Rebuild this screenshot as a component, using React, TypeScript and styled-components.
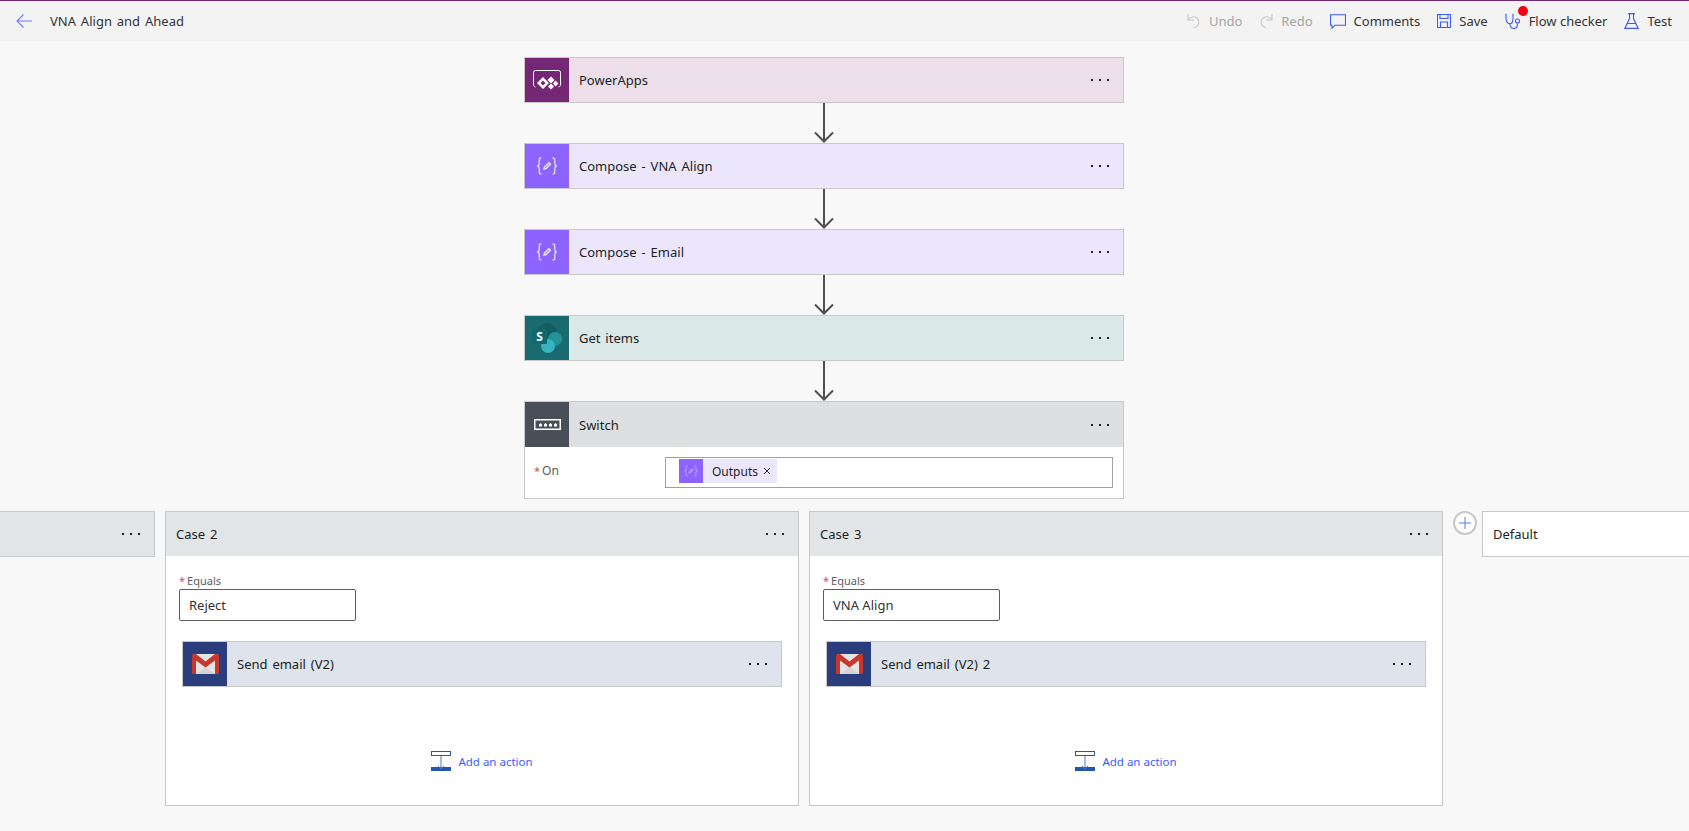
import React from 'react';
import styled, { createGlobalStyle } from 'styled-components';

const Global = createGlobalStyle`
  html, body {
    margin: 0;
    padding: 0;
    height: 100%;
    overflow: hidden;
    background: #f8f8f8;
    font-family: "Noto Sans", "Open Sans", "Liberation Sans", sans-serif;
    color: #201f1e;
  }
`;

const Page = styled.div`
  width: 1689px;
  height: 831px;
  overflow: hidden;
  display: flex;
  flex-direction: column;
`;

const TopBar = styled.header`
  height: 40px;
  flex: none;
  border-top: 1px solid #742774;
  background: #f3f3f3;
  display: flex;
  align-items: center;
  padding: 0 17px 0 16px;
  font-size: 13px;
`;

const Title = styled.div`
  margin-left: 18px;
  color: #333;
  flex: 1;
  word-spacing: 1.5px;
`;

const Commands = styled.div`
  display: flex;
  align-items: center;
  gap: 17px;
`;

const Command = styled.div<{ $off?: boolean }>`
  position: relative;
  display: flex;
  align-items: center;
  gap: 8px;
  color: ${(p) => (p.$off ? '#a6a6a6' : '#333')};
`;

const RedDot = styled.span`
  position: absolute;
  left: 13px;
  top: -6px;
  width: 10px;
  height: 10px;
  border-radius: 50%;
  background: #f00010;
`;

const Canvas = styled.main`
  flex: 1;
  padding-top: 16px;
  display: flex;
  flex-direction: column;
`;

const Flow = styled.div`
  width: 600px;
  margin-left: 524px;
  display: flex;
  flex-direction: column;
`;

const Card = styled.div`
  border: 1px solid #c8c8c8;
  background: #fff;
`;

const CardHead = styled.div<{ $tint: string }>`
  height: 44px;
  display: flex;
  align-items: center;
  background: ${(p) => p.$tint};
  font-size: 13px;
  word-spacing: 1.5px;
  color: #201f1e;
`;

const SwitchHead = styled(CardHead)`
  height: 45px;
`;

const IconBox = styled.div<{ $bg: string }>`
  width: 44px;
  align-self: stretch;
  flex: none;
  display: flex;
  align-items: center;
  justify-content: center;
  background: ${(p) => p.$bg};
`;

const HeadLabel = styled.div`
  margin-left: 10px;
  flex: 1;
`;

const CaseTitle = styled.div`
  flex: 1;
`;

const Dots = styled.div`
  display: flex;
  gap: 6px;
  margin-right: 14px;
  & > i {
    display: block;
    width: 2px;
    height: 2px;
    background: #201f1e;
  }
`;

const Connector = styled.svg`
  display: block;
  width: 24px;
  height: 40px;
  margin-left: 288px;
`;

const SwitchBody = styled.div`
  height: 51px;
  display: grid;
  grid-template-columns: 131px 1fr;
  padding: 10px 10px 0 9px;
  box-sizing: border-box;
  font-size: 12px;
`;

const FieldLabel = styled.div`
  color: #5c5c5c;
  padding-top: 5px;
`;

const Star = styled.span`
  color: #e8415a;
  font-size: 11px;
  margin-right: 2px;
`;

const TokenField = styled.div`
  height: 31px;
  box-sizing: border-box;
  border: 1px solid #a0a0a0;
  padding: 1px 13px;
`;

const Token = styled.div`
  display: inline-flex;
  align-items: center;
  height: 24px;
  background: #ece6fd;
  font-size: 12px;
  padding-right: 6px;
`;

const TokenIcon = styled.div`
  width: 24px;
  height: 24px;
  margin-right: 9px;
  background: #8c63ff;
  display: flex;
  align-items: center;
  justify-content: center;
`;

const TokenClose = styled.svg`
  width: 8px;
  height: 8px;
  margin-left: 5px;
`;

const CaseRow = styled.div`
  display: flex;
  align-items: flex-start;
  margin: 12px 0 0 -1003px;
`;

const CaseCard = styled.section`
  width: 634px;
  flex: none;
  margin-right: 10px;
  box-sizing: border-box;
  border: 1px solid #c8c8c8;
  background: #fff;
  display: flex;
  flex-direction: column;
`;

const StubCase = styled(CaseCard)`
  height: 46px;
  background: #e3e4e6;
`;

const CaseHead = styled.div`
  height: 44px;
  flex: none;
  background: #e3e4e6;
  display: flex;
  align-items: center;
  padding-left: 10px;
  font-size: 13px;
  word-spacing: 1.5px;
`;

const CaseBody = styled.div`
  height: 249px;
  box-sizing: border-box;
  padding: 18px 16px 0 13px;
  display: flex;
  flex-direction: column;
`;

const SmallLabel = styled.div`
  font-size: 11px;
  line-height: 14px;
  color: #5c5c5c;
`;

const Input = styled.div`
  width: 177px;
  height: 32px;
  box-sizing: border-box;
  margin-top: 1px;
  border: 1px solid #605e5c;
  border-radius: 2px;
  font-size: 13px;
  line-height: 30px;
  padding-left: 9px;
  color: #333;
  margin-bottom: 20px;
`;

const Nested = styled(Card)`
  margin-left: 3px;
`;

const AddAction = styled.div`
  display: flex;
  align-items: center;
  justify-content: center;
  gap: 7px;
  margin-top: 64px;
  padding-left: 3px;
  font-size: 11.5px;
  color: #3b5bff;
`;

const PlusCircle = styled.div`
  width: 24px;
  height: 24px;
  box-sizing: border-box;
  flex: none;
  margin-right: 5px;
  border: 2px solid #c8c8c8;
  border-radius: 50%;
  background: #fff;
  display: flex;
  align-items: center;
  justify-content: center;
`;

const DefaultCase = styled(CaseHead)`
  width: 634px;
  box-sizing: border-box;
  height: 46px;
  border: 1px solid #c8c8c8;
  background: #fff;
`;

const blue = '#3b5bff';

const Back = () => (
  <svg width="16" height="14" viewBox="0 0 16 14" fill="none" stroke="#6c7dff" strokeWidth="1.1">
    <path d="M16 7H1M7.500 .5L1 7l6.500 6.500" />
  </svg>
);

const Undo = () => (
  <svg width="14" height="16" viewBox="0 0 14 16" fill="none" stroke="#c8c8c8" strokeWidth="1.1">
    <path d="M1 1v6h6M1 7c3-4 6-4 9-2 3 3 3 7-3 10" />
  </svg>
);

const Redo = () => (
  <svg width="14" height="16" viewBox="0 0 14 16" fill="none" stroke="#c8c8c8" strokeWidth="1.1">
    <path d="M13 1v6H7M13 7c-3-4-6-4-9-2-3 3-3 7 3 10" />
  </svg>
);

const Comment = () => (
  <svg width="16" height="15" viewBox="0 0 16 15" fill="none" stroke={blue} strokeWidth="1.1">
    <path d="M.5 .8h15v10.400H5l-3 3v-3H.5z" />
  </svg>
);

const Save = () => (
  <svg width="14" height="14" viewBox="0 0 14 14" fill="none" stroke={blue} strokeWidth="1.1">
    <path d="M.5 .5h13v13H.5zM3 .5v4h8v-4M3.500 13.500V8h7v5.500" />
  </svg>
);

const Checker = () => (
  <svg width="16" height="16" viewBox="0 0 16 16" fill="none" stroke={blue} strokeWidth="1.1">
    <path d="M1 .8v5c0 3 2 5 4 5s3-2 3-5V.8M5 11c0 3 1 4.500 4 4.500s3.500-2 3.500-5" />
    <circle cx="12.500" cy="8" r="2" />
  </svg>
);

const Flask = () => (
  <svg width="15" height="16" viewBox="0 0 15 16" fill="none" stroke={blue} strokeWidth="1.1">
    <path d="M4 .6h7M5.500 .6v5L.8 15.400h13.400L9.500 5.600v-5M3.500 10.500h8" />
  </svg>
);

const PowerAppsIcon = () => (
  <svg width="28" height="20" viewBox="0 0 28 20" fill="none">
    <path d="M2.500 17C1.500 16.500 .5 16 .5 15V2.500a2 2 0 0 1 2-2h23a2 2 0 0 1 2 2V15c0 1-1 1.500-2 2" stroke="#fff" strokeWidth="1" />
    <path d="M10 7l6 6-6 6-6-6zM10 10.500L7.500 13l2.500 2.500 2.500-2.500z" fill="#fff" fillRule="evenodd" />
    <path d="M18 6.500l3.500 3.500-3.500 3.500-3.500-3.500zM18 13.500l3 3-3 3-3-3zM22.500 10.500l3 3-3 3-2.500-3z" fill="#fff" />
  </svg>
);

const ComposeIcon = ({ size = 22, opacity = 0.9 }: { size?: number; opacity?: number }) => (
  <svg width={size} height={size} viewBox="0 0 24 24" fill="none" stroke="#fff" strokeWidth="1.200" opacity={opacity}>
    <path d="M6 3c-2 0-2.500 1-2.500 3v3c0 2-1 3-2.500 3 1.500 0 2.500 1 2.500 3v3c0 2 .5 3 2.500 3" />
    <path d="M18 3c2 0 2.500 1 2.500 3v3c0 2 1 3 2.500 3-1.500 0-2.500 1-2.500 3v3c0 2-.5 3-2.500 3" />
    <path d="M8.500 15.500l.6-2.500L14 8.100l1.900 1.900L11 14.900z" fill="#fff" fillOpacity=".35" />
  </svg>
);

const SharePointIcon = () => (
  <svg width="32" height="32" viewBox="0 0 32 32">
    <circle cx="16" cy="11" r="10" fill="#125f63" />
    <circle cx="24" cy="17" r="7" fill="#23929a" />
    <circle cx="17" cy="24" r="7" fill="#38b4be" />
    <rect x="1" y="7" width="15" height="15" rx="1" fill="#0f6a6e" />
    <text x="8.500" y="19" textAnchor="middle" fontSize="12" fontWeight="700" fill="#fff" fontFamily="Noto Sans, sans-serif">S</text>
  </svg>
);

const SwitchIcon = () => (
  <svg width="27" height="11" viewBox="0 0 27 11">
    <rect x=".75" y=".75" width="25.500" height="9.500" fill="none" stroke="#fff" strokeWidth="1.500" />
    <path d="M5 7.500v-2l1.500-1.500L8 5.500v2zM10 7.500v-2l1.500-1.500L13 5.500v2zM15 7.500v-2l1.500-1.500L18 5.500v2zM20 7.500v-2l1.500-1.500L23 5.500v2z" fill="#fff" />
  </svg>
);

const GmailIcon = () => (
  <svg width="29" height="22" viewBox="0 0 29 22">
    <rect x="2" y="1" width="25" height="20" fill="#e4e4e4" />
    <path d="M5 21l9.500-7L24 21z" fill="#d4d4d4" />
    <path d="M1 20a1 1 0 0 0 1 1h3V7.500l9.500 7 9.500-7V21h3a1 1 0 0 0 1-1V3a2 2 0 0 0-2-2h-2l-9.500 7.500L5 1H3a2 2 0 0 0-2 2z" fill="#c9362c" />
  </svg>
);

const AddIcon = () => (
  <svg width="20" height="20" viewBox="0 0 20 20" fill="none">
    <rect x=".5" y=".5" width="19" height="4" stroke="#2456b0" />
    <rect y="16" width="20" height="4" fill="#2456b0" />
    <path d="M10 5v13M7 15l3 3 3-3" stroke="#4a77c2" />
  </svg>
);

const Arrow = () => (
  <Connector viewBox="0 0 24 40" fill="none" stroke="#505050" strokeWidth="2">
    <path d="M12 0v38.500M3 29.500l9 9 9-9" />
  </Connector>
);

const More = () => (
  <Dots>
    <i />
    <i />
    <i />
  </Dots>
);

const Step = ({ bg, tint, icon, label }: { bg: string; tint: string; icon: React.ReactNode; label: string }) => (
  <Card>
    <CardHead $tint={tint}>
      <IconBox $bg={bg}>{icon}</IconBox>
      <HeadLabel>{label}</HeadLabel>
      <More />
    </CardHead>
  </Card>
);

const CaseBlock = ({ title, value, action }: { title: string; value: string; action: string }) => (
  <CaseCard>
    <CaseHead>
      <CaseTitle>{title}</CaseTitle>
      <More />
    </CaseHead>
    <CaseBody>
      <SmallLabel>
        <Star>*</Star>Equals
      </SmallLabel>
      <Input>{value}</Input>
      <Nested>
        <CardHead $tint="#dfe3ec">
          <IconBox $bg="#2a3e7e">
            <GmailIcon />
          </IconBox>
          <HeadLabel>{action}</HeadLabel>
          <More />
        </CardHead>
      </Nested>
      <AddAction>
        <AddIcon />
        Add an action
      </AddAction>
    </CaseBody>
  </CaseCard>
);

export default function App() {
  return (
    <Page>
      <Global />
      <TopBar>
        <Back />
        <Title>VNA Align and Ahead</Title>
        <Commands>
          <Command $off>
            <Undo />
            Undo
          </Command>
          <Command $off>
            <Redo />
            Redo
          </Command>
          <Command>
            <Comment />
            Comments
          </Command>
          <Command>
            <Save />
            Save
          </Command>
          <Command>
            <Checker />
            <RedDot />
            Flow checker
          </Command>
          <Command>
            <Flask />
            Test
          </Command>
        </Commands>
      </TopBar>
      <Canvas>
        <Flow>
          <Step bg="#742774" tint="#ecdfea" icon={<PowerAppsIcon />} label="PowerApps" />
          <Arrow />
          <Step bg="#8c63ff" tint="#ece6fd" icon={<ComposeIcon />} label="Compose - VNA Align" />
          <Arrow />
          <Step bg="#8c63ff" tint="#ece6fd" icon={<ComposeIcon />} label="Compose - Email" />
          <Arrow />
          <Step bg="#1a6b70" tint="#dae8e8" icon={<SharePointIcon />} label="Get items" />
          <Arrow />
          <Card>
            <SwitchHead $tint="#dedfe1">
              <IconBox $bg="#484f58">
                <SwitchIcon />
              </IconBox>
              <HeadLabel>Switch</HeadLabel>
              <More />
            </SwitchHead>
            <SwitchBody>
              <FieldLabel>
                <Star>*</Star>On
              </FieldLabel>
              <TokenField>
                <Token>
                  <TokenIcon>
                    <ComposeIcon size={14} opacity={0.6} />
                  </TokenIcon>
                  Outputs
                  <TokenClose viewBox="0 0 8 8" stroke="#333" strokeWidth="1">
                    <path d="M1 1l6 6M7 1L1 7" />
                  </TokenClose>
                </Token>
              </TokenField>
            </SwitchBody>
          </Card>
          <CaseRow>
            <StubCase>
              <CaseHead>
                <CaseTitle />
                <More />
              </CaseHead>
            </StubCase>
            <CaseBlock title="Case 2" value="Reject" action="Send email (V2)" />
            <CaseBlock title="Case 3" value="VNA Align" action="Send email (V2) 2" />
            <PlusCircle>
              <svg width="12" height="12" viewBox="0 0 12 12" stroke="#5b7fd6" strokeWidth="1">
                <path d="M6 0v12M0 6h12" />
              </svg>
            </PlusCircle>
            <DefaultCase>Default</DefaultCase>
          </CaseRow>
        </Flow>
      </Canvas>
    </Page>
  );
}
